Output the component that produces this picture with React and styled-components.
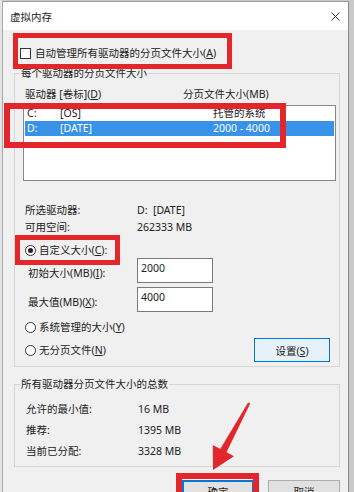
import React from 'react';
import styled, { createGlobalStyle } from 'styled-components';

const GlobalStyle = createGlobalStyle`
  html, body {
    margin: 0;
    padding: 0;
  }
  body {
    width: 354px;
    height: 492px;
    overflow: hidden;
    background: #d2d2d2;
    font-family: "Noto Sans", "Noto Sans CJK SC", sans-serif;
    font-size: 10.5px;
    color: #222;
  }
  * {
    box-sizing: border-box;
  }
`;

const StPage = styled.div`
  position: relative;
  width: 354px;
  height: 492px;
  padding: 1px 5px 0 2px;
  background: linear-gradient(to right, #e4e4e4 0, #e4e4e4 2px, #c9c9c9 2px);
  overflow: hidden;
`;

const StWindow = styled.div`
  height: 100%;
  background: #f0f0f0;
  border-top: 1px solid #9c9c9c;
  border-left: 1px solid #a9a9a9;
  border-right: 1px solid #8a8a8a;
  display: flex;
  flex-direction: column;
  overflow: hidden;
`;

const StTitleBar = styled.div`
  flex-shrink: 0;
  height: 28px;
  background: #fff;
  display: flex;
  align-items: center;
  justify-content: space-between;
  padding: 0 8px 0 7px;
  font-size: 10.5px;
  color: #1a1a1a;
`;

const StBody = styled.div`
  flex-shrink: 0;
  padding: 16px 8px 0 11px;
`;

const StCheckRow = styled.label`
  display: flex;
  align-items: center;
  gap: 4px;
  height: 14px;
  line-height: 14px;
  margin-left: 6px;
`;

const StCheckbox = styled.span`
  width: 11px;
  height: 11px;
  border: 1px solid #333;
  background: #fff;
`;

const StGroupBox = styled.div`
  margin-top: ${(p) => p.$top}px;
  border: 1px solid #d6d6d6;
  padding-bottom: ${(p) => p.$bottom}px;
`;

const StCaption = styled.div`
  width: fit-content;
  margin: -8px 0 0 5px;
  padding: 0 1px;
  line-height: 14px;
  background: #f0f0f0;
`;

const StHeaderRow = styled.div`
  display: grid;
  grid-template-columns: 158px 1fr;
  margin-top: 7px;
  padding-left: 10px;
  line-height: 14px;
`;

const StListBox = styled.div`
  margin: 4px 3px 0 8px;
  height: 76px;
  border: 1px solid #828790;
  background: #fff;
`;

const StListRow = styled.div`
  display: grid;
  grid-template-columns: 33px 153px 1fr;
  height: 15px;
  line-height: 15px;
  margin: 0 1px;
  padding-left: 2px;
  background: ${(p) => (p.$selected ? '#3792e8' : 'transparent')};
  color: ${(p) => (p.$selected ? '#fff' : '#222')};
`;

const StInfoGrid = styled.div`
  display: grid;
  grid-template-columns: ${(p) => p.$col}px 1fr;
  grid-auto-rows: ${(p) => p.$row}px;
  align-items: center;
  margin-top: ${(p) => p.$top}px;
  padding-left: ${(p) => p.$left}px;
`;

const StRadioRow = styled.label`
  display: flex;
  align-items: center;
  gap: 3px;
  height: 14px;
  line-height: 14px;
  margin-top: ${(p) => p.$top || 0}px;
  padding-left: 10px;
`;

const StRadio = styled.span`
  width: 11px;
  height: 11px;
  border-radius: 50%;
  border: 1px solid #333;
  background: #fff;
  display: flex;
  align-items: center;
  justify-content: center;

  &::after {
    content: '';
    width: 5px;
    height: 5px;
    border-radius: 50%;
    background: #222;
    display: ${(p) => (p.$checked ? 'block' : 'none')};
  }
`;

const StInputRow = styled.div`
  display: grid;
  grid-template-columns: 109px 76px;
  align-items: center;
  margin-top: ${(p) => p.$top}px;
  padding-left: 13px;
`;

const StInputLabel = styled.span`
  padding-top: 3px;
`;

const StInput = styled.div`
  height: 25px;
  border: 1px solid #7a7a7a;
  background: #fff;
  padding: 2px 0 0 3px;
  line-height: 14px;
`;

const StActionRow = styled.div`
  display: flex;
  align-items: center;
  justify-content: space-between;
  margin-top: 4px;
  padding: 0 9px 0 0;
`;

const StButton = styled.button`
  width: ${(p) => p.$w}px;
  height: ${(p) => p.$h}px;
  font: inherit;
  color: #222;
  padding: 0;
  background: ${(p) => (p.$hover ? '#e5f1fb' : '#e1e1e1')};
  border: ${(p) => (p.$primary ? '2px solid #0078d7' : p.$hover ? '1px solid #0078d7' : '1px solid #adadad')};
`;

const StButtonBar = styled.div`
  display: flex;
  justify-content: flex-end;
  gap: 14px;
  margin-top: 13px;
`;

const StKey = styled.span`
  text-decoration: underline;
  text-underline-offset: 1px;
`;

const StHighlight = styled.div`
  position: absolute;
  left: ${(p) => p.$x}px;
  top: ${(p) => p.$y}px;
  width: ${(p) => p.$w}px;
  height: ${(p) => p.$h}px;
  border: ${(p) => p.$t || 5}px solid #e3262b;
  pointer-events: none;
`;

const StArrow = styled.svg`
  position: absolute;
  left: 0;
  top: 0;
  pointer-events: none;
`;

const CloseIcon = () => (
  <svg width="9" height="9" viewBox="0 0 9 9">
    <path d="M0.5 0.5 L8.5 8.5 M8.5 0.5 L0.5 8.5" stroke="#333" strokeWidth="1" fill="none" />
  </svg>
);

const drives = [
  { id: 'C:', label: '[OS]', size: '托管的系统' },
  { id: 'D:', label: '[DATE]', size: '2000 - 4000', selected: true },
];

const App = () => {
  return (
    <>
      <GlobalStyle />
      <StPage>
        <StWindow>
          <StTitleBar>
            <span>虚拟内存</span>
            <CloseIcon />
          </StTitleBar>
          <StBody>
            <StCheckRow>
              <StCheckbox />
              <span>
                自动管理所有驱动器的分页文件大小(<StKey>A</StKey>)
              </span>
            </StCheckRow>

            <StGroupBox $top={13} $bottom={4}>
              <StCaption>每个驱动器的分页文件大小</StCaption>
              <StHeaderRow>
                <span>
                  驱动器 [卷标](<StKey>D</StKey>)
                </span>
                <span>分页文件大小(MB)</span>
              </StHeaderRow>
              <StListBox>
                {drives.map((d) => (
                  <StListRow key={d.id} $selected={d.selected}>
                    <span>{d.id}</span>
                    <span>{d.label}</span>
                    <span>{d.size}</span>
                  </StListRow>
                ))}
              </StListBox>

              <StInfoGrid $col={112} $row={17} $top={20} $left={10}>
                <span>所选驱动器:</span>
                <span>D:&nbsp;&nbsp;[DATE]</span>
                <span>可用空间:</span>
                <span>262333 MB</span>
              </StInfoGrid>

              <StRadioRow $top={8}>
                <StRadio $checked />
                <span>
                  自定义大小(<StKey>C</StKey>):
                </span>
              </StRadioRow>

              <StInputRow $top={1}>
                <StInputLabel>
                  初始大小(MB)(<StKey>I</StKey>):
                </StInputLabel>
                <StInput>2000</StInput>
              </StInputRow>
              <StInputRow $top={4}>
                <StInputLabel>
                  最大值(MB)(<StKey>X</StKey>):
                </StInputLabel>
                <StInput>4000</StInput>
              </StInputRow>

              <StRadioRow $top={8}>
                <StRadio />
                <span>
                  系统管理的大小(<StKey>Y</StKey>)
                </span>
              </StRadioRow>
              <StActionRow>
                <StRadioRow>
                  <StRadio />
                  <span>
                    无分页文件(<StKey>N</StKey>)
                  </span>
                </StRadioRow>
                <StButton $w={76} $h={24} $hover>
                  设置(<StKey>S</StKey>)
                </StButton>
              </StActionRow>
            </StGroupBox>

            <StGroupBox $top={17} $bottom={5}>
              <StCaption>所有驱动器分页文件大小的总数</StCaption>
              <StInfoGrid $col={112} $row={21} $top={7} $left={11}>
                <span>允许的最小值:</span>
                <span>16 MB</span>
                <span>推荐:</span>
                <span>1395 MB</span>
                <span>当前已分配:</span>
                <span>3328 MB</span>
              </StInfoGrid>
            </StGroupBox>

            <StButtonBar>
              <StButton $w={72} $h={23} $primary>
                确定
              </StButton>
              <StButton $w={72} $h={23}>
                取消
              </StButton>
            </StButtonBar>
          </StBody>
        </StWindow>

        <StHighlight $x={13} $y={33} $w={219} $h={36} />
        <StHighlight $x={4} $y={103} $w={282} $h={45} $t={6} />
        <StHighlight $x={15} $y={235} $w={105} $h={30} />
        <StHighlight $x={176} $y={473} $w={83} $h={30} $t={6} />

        <StArrow width="354" height="492" viewBox="0 0 354 492">
          <polygon
            points="248.1,402.5 250.2,403.6 226.5,452.3 234,456.3 213,470 212.8,444.9 220.3,448.9"
            fill="#e3262b"
          />
        </StArrow>
      </StPage>
    </>
  );
};

export default App;
